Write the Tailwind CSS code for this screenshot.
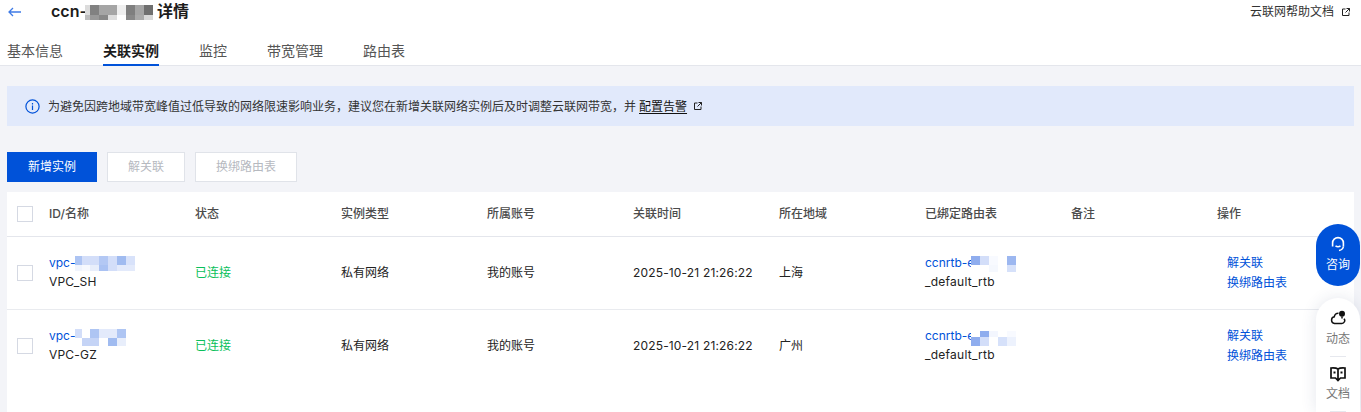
<!DOCTYPE html>
<html lang="en">
<head>
  <meta charset="UTF-8" />
  <meta name="viewport" content="width=device-width, initial-scale=1.0" />
  <title>ccn 详情</title>
  <script src="https://cdn.jsdelivr.net/npm/@tailwindcss/browser@4"></script>
</head>
<body class="relative h-screen overflow-hidden bg-[#f3f4f8] text-xs text-[#222] font-['Inter','Noto_Sans_CJK_SC',sans-serif]">

  <!-- header + tabs -->
  <header class="h-[66px] bg-white border-b border-[#e4e6ec]">
    <div class="flex h-[23px] items-center pl-2 pr-[11px]">
      <svg class="w-[14px] h-[10px]" viewBox="0 0 14 10" fill="none" stroke="#3f7be6" stroke-width="1.3"><path d="M13 5H1M5 1L1 5l4 4"/></svg>
      <div class="relative ml-[29px] -mt-[2px] text-base font-semibold text-[#1c1c1c]">
        ccn-<span class="inline-block w-[66px]"></span> 详情
        <svg class="absolute left-[34px] top-[6px]" width="68" height="15" shape-rendering="crispEdges">
          <rect x="0" y="0" width="5" height="10" fill="#dcdcdc"/><rect x="5" y="0" width="9" height="10" fill="#818181"/><rect x="14" y="0" width="18" height="10" fill="#a5a5a5"/><rect x="32" y="0" width="9" height="10" fill="#efefef"/><rect x="41" y="0" width="9" height="10" fill="#7f7f7f"/><rect x="50" y="0" width="9" height="10" fill="#a5a5a5"/><rect x="59" y="0" width="9" height="10" fill="#6f6f6f"/>
          <rect x="0" y="10" width="5" height="5" fill="#bdbdbd"/><rect x="5" y="10" width="9" height="5" fill="#999"/><rect x="14" y="10" width="9" height="5" fill="#888"/><rect x="23" y="10" width="9" height="5" fill="#ddd"/><rect x="32" y="10" width="9" height="5" fill="#fff"/><rect x="41" y="10" width="9" height="5" fill="#888"/><rect x="50" y="10" width="9" height="5" fill="#aaa"/><rect x="59" y="10" width="9" height="5" fill="#d8d8d8"/>
        </svg>
      </div>
      <div class="ml-auto flex items-center gap-2 text-[#333]">
        云联网帮助文档
        <svg class="w-2 h-2" viewBox="0 0 8 8" fill="none" stroke="#222" stroke-width="1"><path d="M3.5 1H.5v6.5H7V4.5M4.5.5h3v3M7.5.5L3.5 4.5"/></svg>
      </div>
    </div>
    <nav class="flex gap-10 pl-[7px] mt-[8px] text-sm text-[#555]">
      <a class="h-[35px] pt-[10px] leading-[20px]">基本信息</a>
      <a class="h-[35px] pt-[10px] leading-[20px] font-semibold text-[#1c1c1c] border-b-2 border-[#0052d9]">关联实例</a>
      <a class="h-[35px] pt-[10px] leading-[20px]">监控</a>
      <a class="h-[35px] pt-[10px] leading-[20px]">带宽管理</a>
      <a class="h-[35px] pt-[10px] leading-[20px]">路由表</a>
    </nav>
  </header>

  <main class="px-[7px]">
    <!-- notice -->
    <div class="mt-5 flex h-10 items-center bg-[#e1e9fb] pl-[18px] text-[#333]">
      <svg class="w-[15px] h-[15px] shrink-0" viewBox="0 0 15 15" fill="none" stroke="#0052d9" stroke-width="1.2"><circle cx="7.5" cy="7.5" r="6.6"/><path d="M7.5 6.5v4.4M7.5 4v1.4"/></svg>
      <span class="ml-2 pt-px">为避免因跨地域带宽峰值过低导致的网络限速影响业务，建议您在新增关联网络实例后及时调整云联网带宽，并</span>
      <a class="ml-[3px] pt-px underline underline-offset-2 text-[#111]">配置告警</a>
      <svg class="ml-[7px] w-2 h-2" viewBox="0 0 8 8" fill="none" stroke="#222" stroke-width="1"><path d="M3.5 1H.5v6.5H7V4.5M4.5.5h3v3M7.5.5L3.5 4.5"/></svg>
    </div>

    <!-- actions -->
    <div class="mt-[26px] flex gap-[10px]">
      <button class="w-[90px] h-[30px] bg-[#0052d9] text-white">新增实例</button>
      <button class="w-[78px] h-[30px] bg-white border border-[#e0e3e9] text-[#b6b9bf]">解关联</button>
      <button class="w-[102px] h-[30px] bg-white border border-[#e0e3e9] text-[#b6b9bf]">换绑路由表</button>
    </div>

    <!-- table -->
    <section class="mt-[10px] h-[220px] bg-white">
      <div class="grid h-[45px] grid-cols-[42px_repeat(8,146px)_1fr] items-center border-b border-[#e4e6ec] font-medium text-[#4b4b4b]">
        <span class="ml-[10px] w-4 h-4 border border-[#d5d9e3] bg-white"></span>
        <span>ID/名称</span>
        <span>状态</span>
        <span>实例类型</span>
        <span>所属账号</span>
        <span>关联时间</span>
        <span>所在地域</span>
        <span>已绑定路由表</span>
        <span>备注</span>
        <span>操作</span>
      </div>

      <div class="grid h-[73px] grid-cols-[42px_repeat(8,146px)_1fr] items-center border-b border-[#e9ebef]">
        <span class="ml-[10px] w-4 h-4 border border-[#d5d9e3] bg-white"></span>
        <div class="leading-[18px] pb-px">
          <div class="relative text-[#0052d9]">vpc-
            <svg class="absolute left-[26px] top-[2px]" width="60" height="15" shape-rendering="crispEdges">
              <rect x="0" width="7" height="9" fill="#adc4f3"/><rect x="7" width="17" height="9" fill="#d3def9"/><rect x="24" width="9" height="9" fill="#b3c8f4"/><rect x="33" width="9" height="9" fill="#d3def9"/><rect x="42" width="9" height="9" fill="#a0bbf0"/><rect x="51" width="9" height="9" fill="#d8e2fa"/>
              <rect x="0" y="9" width="7" height="6" fill="#f0f4fd"/><rect x="7" y="9" width="8" height="6" fill="#f7f9fe"/><rect x="15" y="9" width="9" height="6" fill="#e8eefb"/><rect x="24" y="9" width="9" height="6" fill="#aac2f3"/><rect x="33" y="9" width="9" height="6" fill="#d3def9"/><rect x="42" y="9" width="18" height="6" fill="#e3eafb"/>
            </svg>
          </div>
          <div class="mt-px tracking-[0.2px]">VPC_SH</div>
        </div>
        <span class="text-[#0abf5b]">已连接</span>
        <span>私有网络</span>
        <span>我的账号</span>
        <span class="tracking-[0.16px]">2025-10-21 21:26:22</span>
        <span>上海</span>
        <div class="leading-[18px] pb-px">
          <div class="relative text-[#0052d9]">ccnrtb-e
            <svg class="absolute left-[46px] top-[2px]" width="45" height="16" shape-rendering="crispEdges">
              <rect width="9" height="9" fill="#8fadee"/><rect x="9" width="9" height="9" fill="#d3def9"/><rect x="18" width="9" height="9" fill="#f8faff"/><rect x="27" width="9" height="9" fill="#fff"/><rect x="36" width="9" height="9" fill="#9cb7f0"/>
              <rect y="9" width="18" height="7" fill="#fff"/><rect x="18" y="9" width="9" height="7" fill="#f5f8fe"/><rect x="27" y="9" width="9" height="7" fill="#fff"/><rect x="36" y="9" width="9" height="7" fill="#d6e1fa"/>
            </svg>
          </div>
          <div class="mt-px tracking-[0.25px]">_default_rtb</div>
        </div>
        <span></span>
        <div class="pl-[10px] leading-[20px] text-[#0052d9]">
          <div>解关联</div>
          <div>换绑路由表</div>
        </div>
      </div>

      <div class="grid h-[71px] grid-cols-[42px_repeat(8,146px)_1fr] items-center">
        <span class="ml-[10px] mt-px w-4 h-4 border border-[#d5d9e3] bg-white"></span>
        <div class="leading-[18px] pb-px">
          <div class="relative text-[#0052d9]">vpc-
            <svg class="absolute left-[26px] top-[2px]" width="51" height="17" shape-rendering="crispEdges">
              <rect width="7" height="9" fill="#d3def9"/><rect x="7" width="8" height="9" fill="#fff"/><rect x="15" width="9" height="9" fill="#aec5f3"/><rect x="24" width="18" height="9" fill="#e3eafb"/><rect x="42" width="9" height="9" fill="#aec5f3"/>
              <rect y="9" width="7" height="8" fill="#fff"/><rect x="7" y="9" width="17" height="8" fill="#c5d4f6"/><rect x="24" y="9" width="9" height="8" fill="#fff"/><rect x="33" y="9" width="9" height="8" fill="#a0bbf0"/><rect x="42" y="9" width="9" height="8" fill="#e8eefb"/>
            </svg>
          </div>
          <div class="mt-px tracking-[0.2px]">VPC-GZ</div>
        </div>
        <span class="text-[#0abf5b]">已连接</span>
        <span>私有网络</span>
        <span>我的账号</span>
        <span class="tracking-[0.16px]">2025-10-21 21:26:22</span>
        <span>广州</span>
        <div class="leading-[18px] pb-px">
          <div class="relative text-[#0052d9]">ccnrtb-e
            <svg class="absolute left-[46px] top-[4px]" width="45" height="15" shape-rendering="crispEdges">
              <rect width="9" height="6" fill="#fff"/><rect x="9" width="9" height="6" fill="#8fadee"/><rect x="18" width="9" height="6" fill="#f3f6fe"/><rect x="27" width="9" height="6" fill="#fff"/><rect x="36" width="9" height="6" fill="#f8faff"/>
              <rect y="6" width="9" height="9" fill="#8fadee"/><rect x="9" y="6" width="9" height="9" fill="#d3def9"/><rect x="18" y="6" width="9" height="9" fill="#fff"/><rect x="27" y="6" width="9" height="9" fill="#d6e1fa"/><rect x="36" y="6" width="9" height="9" fill="#edf2fd"/>
            </svg>
          </div>
          <div class="mt-px tracking-[0.25px]">_default_rtb</div>
        </div>
        <span></span>
        <div class="pl-[10px] leading-[20px] text-[#0052d9]">
          <div>解关联</div>
          <div>换绑路由表</div>
        </div>
      </div>
    </section>
  </main>

  <!-- floating widgets -->
  <aside class="absolute left-[1316px] top-[224px] w-11 flex flex-col gap-3">
    <a class="flex h-[62px] flex-col items-center rounded-[22px] bg-[#0052d9] pt-[12px] text-white">
      <svg class="w-4 h-4" viewBox="0 0 16 16" fill="none" stroke="#fff" stroke-width="1.6"><path d="M2.600 10.500V7a5.400 5.400 0 0 1 10.800 0v3.500"/><path d="M5.500 9.800q2.500 1.800 5 0"/><path d="M13.400 10.500q-.5 3.300-4.400 4"/></svg>
      <span class="mt-[3px] leading-[20px]">咨询</span>
    </a>
    <div class="flex flex-col items-center rounded-t-[22px] bg-white h-[114px] pt-3 text-[#777] shadow-[0_0_16px_rgba(40,60,110,0.12)]">
      <svg class="w-4 h-4" viewBox="0 0 16 16" fill="none" stroke="#111" stroke-width="1.5"><path d="M8.500 3.200A4 4 0 0 0 4.300 6.800 3.400 3.400 0 0 0 4.500 13.500h7.300a2.900 2.900 0 0 0 2.200-4.800"/><circle cx="12" cy="3.800" r="3" fill="#111" stroke="none"/><path d="M12 6.500v2"/></svg>
      <span class="mt-[3px] leading-[20px]">动态</span>
      <span class="mt-[7px] w-4 border-t border-[#e6e8ee]"></span>
      <svg class="mt-[9px] w-4 h-4" viewBox="0 0 16 16" fill="none" stroke="#111" stroke-width="1.700"><path d="M8 3C6.500 2 3.500 1.800 1 2v10h4.500L8 14.500 10.500 12H15V2C12.500 1.800 9.500 2 8 3zM8 3v11"/><path d="M3.500 6.500h2M10.500 6.500h2" stroke-width="2.200"/></svg>
      <span class="mt-[2px] leading-[20px]">文档</span>
      <span class="mt-[7px] w-4 border-t border-[#e6e8ee]"></span>
    </div>
  </aside>
</body>
</html>
